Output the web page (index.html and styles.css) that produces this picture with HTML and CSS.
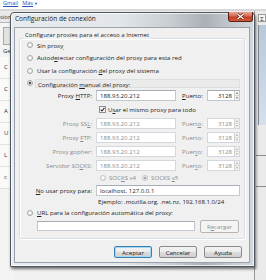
FILE: index.html
```html
<!DOCTYPE html>
<html lang="es">
<head>
<meta charset="utf-8">
<title>Configuración de conexión</title>
<link rel="stylesheet" href="styles.css">
</head>
<body>
<div class="topbar"><a class="lnk">Gmail</a><a class="lnk">Más</a><span class="caret">▼</span></div>
<div class="desk">
  <div class="bgwin-left">
    <div class="bl-tab">sione</div>
    <div class="bl-icon"></div>
    <div class="bl-txt">Gene</div>
    <div class="bl-item">C</div>
    <div class="bl-item">C</div>
    <div class="bl-item">A</div>
    <div class="bl-item">U</div>
    <div class="bl-item">L</div>
    <div class="bl-item">c</div>
  </div>
  <div class="bgwin-right">
    <div class="br-btn">Σ</div>
    <div class="br-panel"></div>
    <div class="br-line"></div>
    <div class="br-line"></div>
  </div>
</div>

<div class="dialog">
  <div class="titlebar">
    <span class="title">Configuración de conexión</span>
    <span class="close"><svg width="9" height="7" viewBox="0 0 9 7"><path d="M1.5 1 L7.5 6 M7.5 1 L1.5 6" stroke="#5a1a10" stroke-width="2.6"/><path d="M1.5 1 L7.5 6 M7.5 1 L1.5 6" stroke="#fff" stroke-width="1.3"/></svg></span>
  </div>
  <div class="client">
    <div class="group">
      <div class="legend">Configurar proxies para el acceso a Internet</div>
      <div class="row h12"><span class="radio"></span><span>Sin prox<u>y</u></span></div>
      <div class="row h13"><span class="radio"></span><span>Autod<u>e</u>tectar configuración del proxy para esta red</span></div>
      <div class="row h13"><span class="radio"></span><span>Usar la configuración <u>d</u>el proxy del sistema</span></div>
      <div class="row h12 focusrow"><span class="radio on"></span><span>Configuración <u>m</u>anual del proxy:</span></div>
      <div class="row h13 prow">
        <span class="plabel">Proxy <u>H</u>TTP:</span>
        <span class="field host">188.93.20.212</span>
        <span class="portlabel"><u>P</u>uerto:</span>
        <span class="field port">3128<span class="spin"><i class="up"></i><i class="dn"></i></span></span>
      </div>
      <div class="row h14 checkrow"><span class="check"><svg width="5" height="5" viewBox="0 0 5 5"><path d="M0.6 2.6 L2 4 L4.4 0.8" fill="none" stroke="#2b2b2b" stroke-width="1.1"/></svg></span><span>U<u>s</u>ar el mismo proxy para todo</span></div>
      <div class="row h14 prow off">
        <span class="plabel">Proxy SS<u>L</u>:</span>
        <span class="field host">188.93.20.212</span>
        <span class="portlabel">Puert<u>o</u>:</span>
        <span class="field port">3128<span class="spin"><i class="up"></i><i class="dn"></i></span></span>
      </div>
      <div class="row h14 prow off">
        <span class="plabel">Proxy <u>F</u>TP:</span>
        <span class="field host">188.93.20.212</span>
        <span class="portlabel">Puerto:</span>
        <span class="field port">3128<span class="spin"><i class="up"></i><i class="dn"></i></span></span>
      </div>
      <div class="row h14 prow off">
        <span class="plabel">Proxy gopher:</span>
        <span class="field host">188.93.20.212</span>
        <span class="portlabel">Puer<u>t</u>o:</span>
        <span class="field port">3128<span class="spin"><i class="up"></i><i class="dn"></i></span></span>
      </div>
      <div class="row h14 prow off">
        <span class="plabel">Servidor SO<u>C</u>KS:</span>
        <span class="field host">188.93.20.212</span>
        <span class="portlabel">Puer<u>t</u>o:</span>
        <span class="field port">3128<span class="spin"><i class="up"></i><i class="dn"></i></span></span>
      </div>
      <div class="row h11 socksrow off">
        <span class="radio"></span><span class="v4">SOC<u>K</u>S v4</span>
        <span class="radio on"></span><span>SOCKS <u>v</u>5</span>
      </div>
      <div class="row h14 prow">
        <span class="plabel"><u>N</u>o usar proxy para:</span>
        <span class="field noproxy">localhost, 127.0.0.1</span>
      </div>
      <div class="row h9 example">Ejemplo: .mozilla.org, .net.nz, 192.168.1.0/24</div>
      <div class="row h13"><span class="radio"></span><span><u>U</u>RL para la configuración automática del proxy:</span></div>
      <div class="row h14 urlrow">
        <span class="field url off"></span>
        <span class="btn disabled">R<u>e</u>cargar</span>
      </div>
    </div>
    <div class="buttons">
      <span class="btn default">Aceptar</span>
      <span class="btn">Cancelar</span>
      <span class="btn">Ayuda</span>
    </div>
  </div>
</div>
</body>
</html>
```

FILE: styles.css
```css
* { box-sizing: border-box; }
html, body { margin: 0; padding: 0; }
body {
  width: 266px;
  height: 280px;
  overflow: hidden;
  position: relative;
  background: #ffffff;
  font-family: "Open Sans", "Noto Sans", sans-serif;
  font-size: 6.1px;
  color: #222;
}
u { text-decoration: underline; text-underline-offset: 0.5px; }

/* background page */
.topbar {
  height: 9px;
  display: flex;
  align-items: flex-start;
  gap: 4px;
  padding-left: 3px;
  font-size: 5.6px;
  line-height: 7px;
  color: #2a55b0;
  background: #fff;
}
.lnk { text-decoration: underline; color: #2a55b0; }
.caret { font-size: 4px; margin-left: -3px; line-height: 7px; }
.desk {
  height: 271px;
  display: flex;
  justify-content: space-between;
  border-top: 2px solid #d8d8d8;
  background: #f0f0f0;
}
.bgwin-left {
  width: 14px;
  display: flex;
  flex-direction: column;
  font-size: 6px;
  color: #333;
  background: #f4f4f4;
}
.bl-tab { height: 12px; padding-top: 2px; border-bottom: 1px solid #b9b9b9; background: #e9e9e9; }
.bl-icon { height: 18px; margin: 4px 0 2px 3px; width: 8px; background: #e2e2e2; border: 1px solid #a8a8a8; }
.bl-txt { height: 10px; padding-left: 3px; }
.bl-item { height: 22px; padding-left: 4px; padding-top: 6px; border-bottom: 1px solid #e2e2e2; background: #fafafa; }
.bgwin-right {
  width: 12px;
  display: flex;
  flex-direction: column;
  align-items: flex-end;
  background: #eaeaea;
  border-left: 1px solid #9a9a9a;
}
.br-btn { margin-top: 3px; width: 8px; height: 8px; font-size: 6px; line-height: 8px; text-align: center; border: 1px solid #999; background: #f6f6f6; }
.br-panel { margin-top: 3px; width: 8px; height: 100px; background: linear-gradient(#b9c8da, #d6e0ea); border-left: 1px solid #7d8894; }
.br-line { margin-top: 30px; width: 10px; height: 1px; background: #8a8a8a; }

/* dialog window */
.dialog {
  position: absolute;
  left: 10px;
  top: 12px;
  width: 245px;
  height: 255px;
  display: flex;
  flex-direction: column;
  padding: 0 4px 3px 3px;
  border: 1px solid #4e565f;
  border-radius: 4px 4px 1px 1px;
  background: linear-gradient(90deg, #e7ebef 0%, #e2e6ea 45%, #c9ced3 65%, #aab0b6 80%, #c2c8cd 90%, #d3d8dc 100%);
  box-shadow: 1px 2px 3px rgba(0, 0, 0, 0.55), inset 0 0 0 1px rgba(255, 255, 255, 0.7);
}
.titlebar {
  height: 14px;
  display: flex;
  align-items: flex-start;
}
.title {
  padding-left: 1px;
  padding-top: 2px;
  font-size: 6.5px;
  line-height: 8px;
  color: #1a1a1a;
}
.close {
  margin-left: auto;
  margin-right: -3px;
  margin-top: -1px;
  width: 25px;
  height: 10px;
  display: flex;
  align-items: center;
  justify-content: center;
  border: 1px solid #5c1f14;
  border-top: none;
  border-radius: 0 0 3px 3px;
  background: linear-gradient(#e9a596 0%, #d36a55 45%, #c13f25 55%, #d2583c 100%);
}
.close svg { display: block; }

.client {
  height: 236px;
  display: flex;
  flex-direction: column;
  background: #f0f0f0;
  border: 1px solid #9aa3ad;
}

/* group box */
.group {
  margin: 10px 0 0 4px;
  width: 226px;
  height: 201px;
  padding: 3px 0 2px 7px;
  border: 1px solid #d5dfe5;
  border-radius: 2px;
  box-shadow: inset 1px 1px 0 #fff, 1px 1px 0 #fff;
  display: flex;
  flex-direction: column;
}
.legend {
  margin: -12px 0 0 -3px;
  height: 9px;
  line-height: 9px;
  align-self: flex-start;
  padding: 0 1px;
  background: #f0f0f0;
  color: #1e1e1e;
}
.row {
  display: flex;
  align-items: center;
  white-space: nowrap;
  flex: none;
}
.h9 { height: 9px; }
.h11 { height: 11px; }
.h12 { height: 12px; }
.h13 { height: 13px; }
.h14 { height: 14px; }

.radio {
  width: 6px;
  height: 6px;
  margin-right: 4px;
  flex: none;
  border-radius: 50%;
  border: 1px solid #a3a6a8;
  background: radial-gradient(circle at 50% 40%, #fff 0%, #ececec 70%, #d8d8d8 100%);
}
.radio.on { background: radial-gradient(circle, #3a4a3c 0%, #41523f 35%, #dfe3e0 50%, #f2f2f2 100%); }
.focusrow { margin-right: 4px; }
.focusrow > span:last-child {
  flex: 1;
  margin-left: -2px;
  padding-left: 2px;
  height: 9px;
  line-height: 9px;
  background: #ebebeb;
  border: 1px solid #dedede;
}

.prow .plabel { width: 65px; text-align: right; flex: none; }
.field {
  height: 11px;
  line-height: 9px;
  padding-left: 3px;
  background: #fff;
  border: 1px solid #c2c8d0;
  border-top-color: #a6adb7;
  color: #222;
  flex: none;
  position: relative;
}
.host { width: 80px; margin-left: 4px; }
.portlabel { width: 21px; margin-left: 6px; flex: none; }
.port { width: 33px; margin-left: 4px; text-align: right; padding-right: 7px; }
.spin {
  position: absolute;
  right: 0;
  top: 0;
  width: 5px;
  height: 9px;
  display: flex;
  flex-direction: column;
  border-left: 1px solid #d0d0d0;
  background: #f2f2f2;
}
.spin i { flex: 1; display: flex; align-items: center; justify-content: center; }
.spin i::after { content: ""; border-left: 1.5px solid transparent; border-right: 1.5px solid transparent; }
.spin .up::after { border-bottom: 2px solid #777; }
.spin .dn::after { border-top: 2px solid #777; }
.spin .up { border-bottom: 1px solid #d8d8d8; }

.off, .off .field { color: #8a8a8a; }
.off .field { border-color: #d4d8dd; }
.off .spin i::after { border-bottom-color: #aaa; border-top-color: #aaa; }

.checkrow { padding-left: 72px; }
.check {
  width: 7px;
  height: 7px;
  margin-right: 2px;
  border: 1px solid #8f8f8f;
  background: linear-gradient(#f4f4f4, #fff);
  display: flex;
  align-items: center;
  justify-content: center;
}
.check svg { display: block; }

.socksrow { padding-left: 73px; }
.socksrow .radio { margin-right: 3px; border-color: #c2c4c6; }
.socksrow .radio.on { background: radial-gradient(circle, #9aa09b 0%, #a7aca7 35%, #e6e8e6 50%, #f4f4f4 100%); }
.socksrow .v4 { margin-right: 6px; }

.noproxy { width: 144px; margin-left: 4px; }
.example { padding-left: 71px; color: #222; }

.urlrow { padding-left: 10px; }
.url { width: 158px; height: 10px; }
.btn {
  width: 39px;
  height: 13px;
  margin-left: 5px;
  display: flex;
  align-items: center;
  justify-content: center;
  border: 1px solid #8a8a8a;
  border-radius: 2px;
  background: linear-gradient(#f3f3f3 0%, #ebebeb 50%, #dddddd 51%, #cfcfcf 100%);
  color: #222;
  flex: none;
}
.btn.disabled { border-color: #b5b5b5; background: #f4f4f4; color: #8f8f8f; }

.buttons {
  margin-top: 7px;
  display: flex;
  justify-content: flex-end;
  gap: 7px;
  padding-right: 7px;
}
.buttons .btn { width: 38px; height: 12px; margin-left: 0; }
.btn.default { border-color: #3c7fb1; box-shadow: inset 0 0 0 1px #a3d7f3; }
```
